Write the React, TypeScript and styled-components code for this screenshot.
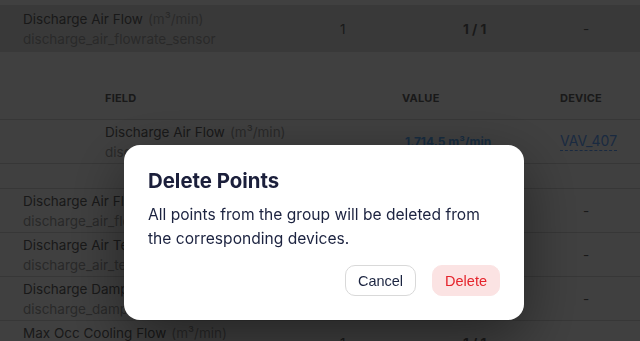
import React from "react";
import styled, { createGlobalStyle } from "styled-components";

const GlobalStyle = createGlobalStyle`
  html, body { margin: 0; padding: 0; background: #ffffff; overflow: hidden; }
  body { font-family: Inter, "Noto Sans", sans-serif; }
  * { box-sizing: border-box; }
`;

const Page = styled.div`
  width: 640px;
  height: 341px;
  padding-top: 5px;
  overflow: hidden;
  background: #ffffff;
`;

const MainRow = styled.div<{ $highlight?: boolean; $tall?: boolean }>`
  display: grid;
  grid-template-columns: 317px 123px 120px 1fr;
  align-items: center;
  padding-left: 23px;
  height: ${(p) => (p.$tall ? 47 : 44)}px;
  background: ${(p) => (p.$highlight ? "#e4e4e4" : "transparent")};
  border-bottom: ${(p) => (p.$highlight ? "none" : "1px solid #dadada")};
`;

const NameCell = styled.div`
  display: flex;
  flex-direction: column;
  font-size: 13.5px;
  line-height: 20px;
  white-space: nowrap;
`;

const Name = styled.span`
  color: #666666;
`;

const Unit = styled.span`
  color: #a4a4a4;
  margin-left: 5px;
`;

const Code = styled.span`
  color: #a4a4a4;
`;

const Cell = styled.div<{ $bold?: boolean }>`
  font-size: 13.5px;
  color: #666666;
  font-weight: ${(p) => (p.$bold ? 700 : 400)};
  white-space: nowrap;
`;

const Expanded = styled.section`
  padding: 24px 0;
  border-bottom: 1px solid #dadada;
`;

const SubGrid = styled.div`
  display: grid;
  grid-template-columns: 297px 158px 1fr;
  align-items: center;
  padding-left: 105px;
  height: 44px;
  border-bottom: 1px solid #dadada;
`;

const HeadLabel = styled.div`
  font-size: 11px;
  font-weight: 700;
  letter-spacing: 0.2px;
  color: #666666;
  text-transform: uppercase;
`;

const Value = styled.div`
  padding-left: 3px;
  font-size: 12px;
  font-weight: 700;
  color: #5fb0ff;
  white-space: nowrap;
`;

const DeviceLink = styled.a`
  justify-self: start;
  font-size: 14px;
  color: #6aa8ff;
  text-decoration: none;
  border-bottom: 1px dashed #6aa8ff;
  line-height: 18px;
`;

const Overlay = styled.div`
  position: fixed;
  inset: 0;
  background: rgba(0, 0, 0, 0.75);
  display: flex;
  align-items: flex-start;
  justify-content: flex-start;
  padding: 145px 0 0 124px;
`;

const Modal = styled.div`
  width: 400px;
  background: #ffffff;
  border-radius: 16px;
  padding: 22px 24px 24px;
  box-shadow: 0 18px 60px rgba(0, 0, 0, 0.45);
  display: flex;
  flex-direction: column;
`;

const Title = styled.h2`
  margin: 0 0 8px;
  font-size: 20.4px;
  line-height: 28px;
  font-weight: 700;
  color: #1b1f3b;
`;

const Body = styled.p`
  margin: 0 0 14px;
  font-size: 15.6px;
  line-height: 24px;
  color: #1c2340;
`;

const Actions = styled.div`
  display: flex;
  justify-content: flex-end;
  gap: 16px;
`;

const Button = styled.button<{ $danger?: boolean }>`
  height: 31px;
  padding: 0 12px;
  border-radius: 10px;
  font-family: "Liberation Sans", Arial, sans-serif;
  font-size: 14.5px;
  cursor: pointer;
  border: 1px solid ${(p) => (p.$danger ? "#fbe3e3" : "#d9d9d9")};
  background: ${(p) => (p.$danger ? "#fbe3e3" : "#ffffff")};
  color: ${(p) => (p.$danger ? "#e5232b" : "#1b2440")};
`;

type Point = { name: string; unit?: string; code: string };

const rows: Point[] = [
  { name: "Discharge Air Flow", unit: "(m³/min)", code: "discharge_air_flowrate_sensor" },
  { name: "Discharge Air Temperature", unit: "(°C)", code: "discharge_air_temperature_sensor" },
  { name: "Discharge Damper Position", unit: "(%)", code: "discharge_damper_position" },
  { name: "Max Occ Cooling Flow", unit: "(m³/min)", code: "max_occ_cooling_flow_setpoint" },
];

const PointName: React.FC<{ p: Point }> = ({ p }) => (
  <NameCell>
    <span>
      <Name>{p.name}</Name>
      {p.unit && <Unit>{p.unit}</Unit>}
    </span>
    <Code>{p.code}</Code>
  </NameCell>
);

export default function App() {
  const first = rows[0];
  return (
    <>
      <GlobalStyle />
      <Page>
        <MainRow $highlight $tall>
          <PointName p={first} />
          <Cell>1</Cell>
          <Cell $bold>1 / 1</Cell>
          <Cell>-</Cell>
        </MainRow>
        <Expanded>
          <SubGrid>
            <HeadLabel>Field</HeadLabel>
            <HeadLabel>Value</HeadLabel>
            <HeadLabel>Device</HeadLabel>
          </SubGrid>
          <SubGrid>
            <PointName p={first} />
            <Value>1,714.5 m³/min</Value>
            <DeviceLink>VAV_407</DeviceLink>
          </SubGrid>
        </Expanded>
        <MainRow>
          <PointName p={rows[0]} />
          <Cell></Cell>
          <Cell></Cell>
          <Cell>-</Cell>
        </MainRow>
        <MainRow>
          <PointName p={rows[1]} />
          <Cell></Cell>
          <Cell></Cell>
          <Cell>-</Cell>
        </MainRow>
        <MainRow>
          <PointName p={rows[2]} />
          <Cell></Cell>
          <Cell></Cell>
          <Cell>-</Cell>
        </MainRow>
        <MainRow>
          <PointName p={rows[3]} />
          <Cell>1</Cell>
          <Cell $bold>1 / 1</Cell>
          <Cell>-</Cell>
        </MainRow>
      </Page>
      <Overlay>
        <Modal role="dialog" aria-labelledby="dlg-title">
          <Title id="dlg-title">Delete Points</Title>
          <Body>
            All points from the group will be deleted from the corresponding devices.
          </Body>
          <Actions>
            <Button>Cancel</Button>
            <Button $danger>Delete</Button>
          </Actions>
        </Modal>
      </Overlay>
    </>
  );
}
